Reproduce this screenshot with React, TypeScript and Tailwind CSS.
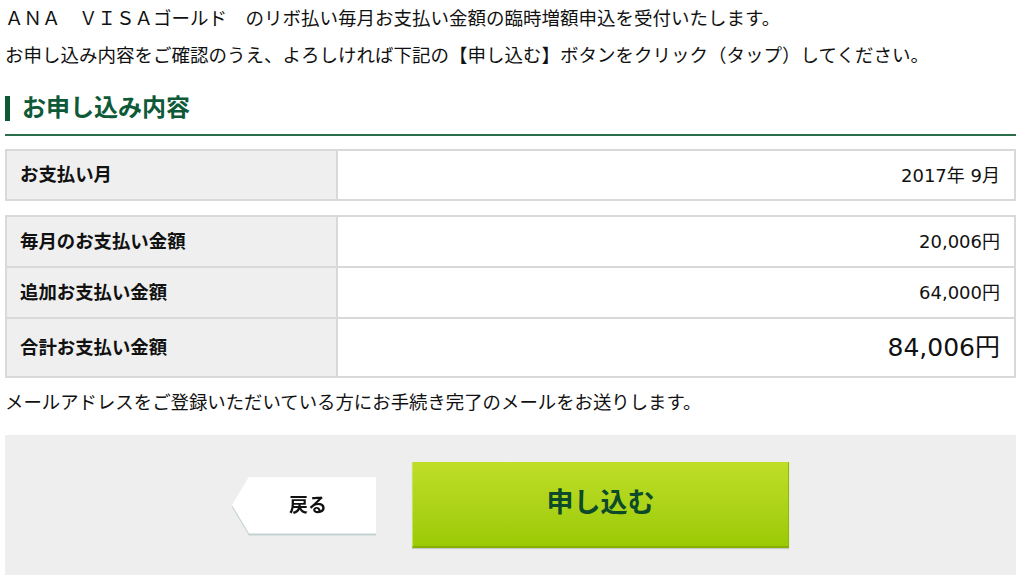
import React from "react";

const font = "font-['DejaVu_Sans','Noto_Sans_CJK_JP',sans-serif]";

function Row({ label, value, h, big, first }: { label: string; value: string; h: string; big?: boolean; first?: boolean }) {
  return (
    <div className={`flex ${first ? "" : "border-t-2 border-[#d9d9d9]"} ${h}`}>
      <div className="w-[331px] shrink-0 bg-[#efefef] border-r-2 border-[#d9d9d9] flex items-center pl-[13px] text-[18.4px] font-bold text-[#111]">
        {label}
      </div>
      <div className={`flex-1 flex items-center justify-end pr-[14px] text-[#111] ${big ? "text-[25px]" : "text-[18px]"}`}>
        {value}
      </div>
    </div>
  );
}

export default function App() {
  return (
    <div className={`${font} bg-white w-[1024px] h-[584px] overflow-hidden pl-[5px] pr-[8px] text-[#111]`}>
      <p className="text-[18.5px] leading-[37px] whitespace-nowrap">ＡＮＡ　ＶＩＳＡゴールド　のリボ払い毎月お支払い金額の臨時増額申込を受付いたします。</p>
      <p className="text-[18.5px] leading-[37px] whitespace-nowrap">お申し込み内容をご確認のうえ、よろしければ下記の【申し込む】ボタンをクリック（タップ）してください。</p>

      <div className="mt-[22px] pb-[13px] border-b-2 border-[#2a6e4b] flex items-center">
        <div className="w-[5px] h-[25px] bg-[#0b5a33]" />
        <h2 className="ml-[12px] text-[24px] leading-[25px] font-bold text-[#0e5a38]">お申し込み内容</h2>
      </div>

      <div className="mt-[13px] border-2 border-[#d9d9d9]">
        <Row first label="お支払い月" value="2017年 9月" h="h-[48px]" />
      </div>

      <div className="mt-[14px] border-2 border-[#d9d9d9]">
        <Row first label="毎月のお支払い金額" value="20,006円" h="h-[49px]" />
        <Row label="追加お支払い金額" value="64,000円" h="h-[51px]" />
        <Row label="合計お支払い金額" value="84,006円" h="h-[59px]" big />
      </div>

      <p className="mt-[12px] text-[18.4px] leading-[26px] whitespace-nowrap">メールアドレスをご登録いただいている方にお手続き完了のメールをお送りします。</p>

      <div className="mt-[19px] h-[140px] bg-[#eeeeee] flex items-center justify-center gap-[36px]">
        <div className="drop-shadow-[0_2px_0_#c3d1d1]">
          <button className="w-[144px] h-[57px] bg-white [clip-path:polygon(17px_0,100%_0,100%_100%,17px_100%,0_50%)] flex items-center justify-center pl-[8px] text-[19px] font-bold text-[#111]">
            戻る
          </button>
        </div>
        <button className="w-[377px] h-[86px] bg-linear-to-b from-[#bfde27] to-[#9bca02] border-l border-l-[#c9e266] border-r border-r-[#8fbb00] border-b-2 border-b-[#86b000] shadow-[0_1px_1px_rgba(0,0,0,0.15)] flex items-center justify-center text-[27px] font-bold text-[#0c4a2a] pb-[2px]">
          申し込む
        </button>
      </div>
    </div>
  );
}
